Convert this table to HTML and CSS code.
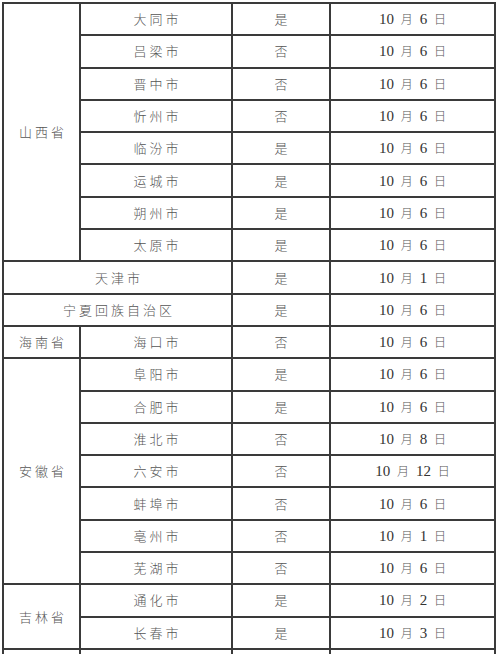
FILE: index.html
```html
<!DOCTYPE html>
<html lang="zh">
<head>
<meta charset="utf-8">
<link rel="stylesheet" href="styles.css">
</head>
<body>
<table class="sheet">
  <colgroup>
    <col class="c-prov">
    <col class="c-city">
    <col class="c-flag">
    <col class="c-date">
  </colgroup>
  <tbody>
    <tr><td class="cn" rowspan="8">山西省</td><td class="cn">大同市</td><td class="cn">是</td><td class="date">10 <span class="cj">月</span> 6 <span class="cj">日</span></td></tr>
    <tr><td class="cn">吕梁市</td><td class="cn">否</td><td class="date">10 <span class="cj">月</span> 6 <span class="cj">日</span></td></tr>
    <tr><td class="cn">晋中市</td><td class="cn">否</td><td class="date">10 <span class="cj">月</span> 6 <span class="cj">日</span></td></tr>
    <tr><td class="cn">忻州市</td><td class="cn">否</td><td class="date">10 <span class="cj">月</span> 6 <span class="cj">日</span></td></tr>
    <tr><td class="cn">临汾市</td><td class="cn">是</td><td class="date">10 <span class="cj">月</span> 6 <span class="cj">日</span></td></tr>
    <tr><td class="cn">运城市</td><td class="cn">是</td><td class="date">10 <span class="cj">月</span> 6 <span class="cj">日</span></td></tr>
    <tr><td class="cn">朔州市</td><td class="cn">是</td><td class="date">10 <span class="cj">月</span> 6 <span class="cj">日</span></td></tr>
    <tr><td class="cn">太原市</td><td class="cn">是</td><td class="date">10 <span class="cj">月</span> 6 <span class="cj">日</span></td></tr>
    <tr><td class="cn" colspan="2">天津市</td><td class="cn">是</td><td class="date">10 <span class="cj">月</span> 1 <span class="cj">日</span></td></tr>
    <tr><td class="cn" colspan="2">宁夏回族自治区</td><td class="cn">是</td><td class="date">10 <span class="cj">月</span> 6 <span class="cj">日</span></td></tr>
    <tr><td class="cn">海南省</td><td class="cn">海口市</td><td class="cn">否</td><td class="date">10 <span class="cj">月</span> 6 <span class="cj">日</span></td></tr>
    <tr><td class="cn" rowspan="7">安徽省</td><td class="cn">阜阳市</td><td class="cn">是</td><td class="date">10 <span class="cj">月</span> 6 <span class="cj">日</span></td></tr>
    <tr><td class="cn">合肥市</td><td class="cn">是</td><td class="date">10 <span class="cj">月</span> 6 <span class="cj">日</span></td></tr>
    <tr><td class="cn">淮北市</td><td class="cn">否</td><td class="date">10 <span class="cj">月</span> 8 <span class="cj">日</span></td></tr>
    <tr><td class="cn">六安市</td><td class="cn">否</td><td class="date">10 <span class="cj">月</span> 12 <span class="cj">日</span></td></tr>
    <tr><td class="cn">蚌埠市</td><td class="cn">否</td><td class="date">10 <span class="cj">月</span> 6 <span class="cj">日</span></td></tr>
    <tr><td class="cn">亳州市</td><td class="cn">否</td><td class="date">10 <span class="cj">月</span> 1 <span class="cj">日</span></td></tr>
    <tr><td class="cn">芜湖市</td><td class="cn">否</td><td class="date">10 <span class="cj">月</span> 6 <span class="cj">日</span></td></tr>
    <tr><td class="cn" rowspan="2">吉林省</td><td class="cn">通化市</td><td class="cn">是</td><td class="date">10 <span class="cj">月</span> 2 <span class="cj">日</span></td></tr>
    <tr><td class="cn">长春市</td><td class="cn">是</td><td class="date">10 <span class="cj">月</span> 3 <span class="cj">日</span></td></tr>
    <tr><td class="cn">&nbsp;</td><td class="cn">&nbsp;</td><td class="cn">&nbsp;</td><td class="date">&nbsp;</td></tr>
  </tbody>
</table>
</body>
</html>
```

FILE: styles.css
```css
html, body {
  margin: 0;
  padding: 0;
  background: #ffffff;
}
body {
  padding: 2px 0 0 2px;
  overflow: hidden;
  height: 654px;
  box-sizing: border-box;
}
.sheet {
  border-collapse: collapse;
  table-layout: fixed;
  width: 494px;
}
.c-prov { width: 77px; }
.c-city { width: 152px; }
.c-flag { width: 98px; }
.c-date { width: 165px; }
.sheet tr {
  height: 32.3px;
}
.sheet td {
  border: 2px solid #3a3a3a;
  padding: 0;
  text-align: center;
  vertical-align: middle;
  line-height: 18px;
}
.cn {
  font-family: "Noto Sans CJK SC", "Noto Sans", sans-serif;
  font-weight: 300;
  font-size: 13px;
  letter-spacing: 3px;
  padding-left: 3px !important;
  color: #555555;
}
.date {
  font-family: "Liberation Serif", "Noto Sans CJK SC", serif;
  font-size: 15px;
  color: #333333;
  word-spacing: 3px;
}
.cj {
  font-family: "Noto Sans CJK SC", sans-serif;
  font-weight: 300;
  font-size: 12px;
  color: #555555;
}
```
